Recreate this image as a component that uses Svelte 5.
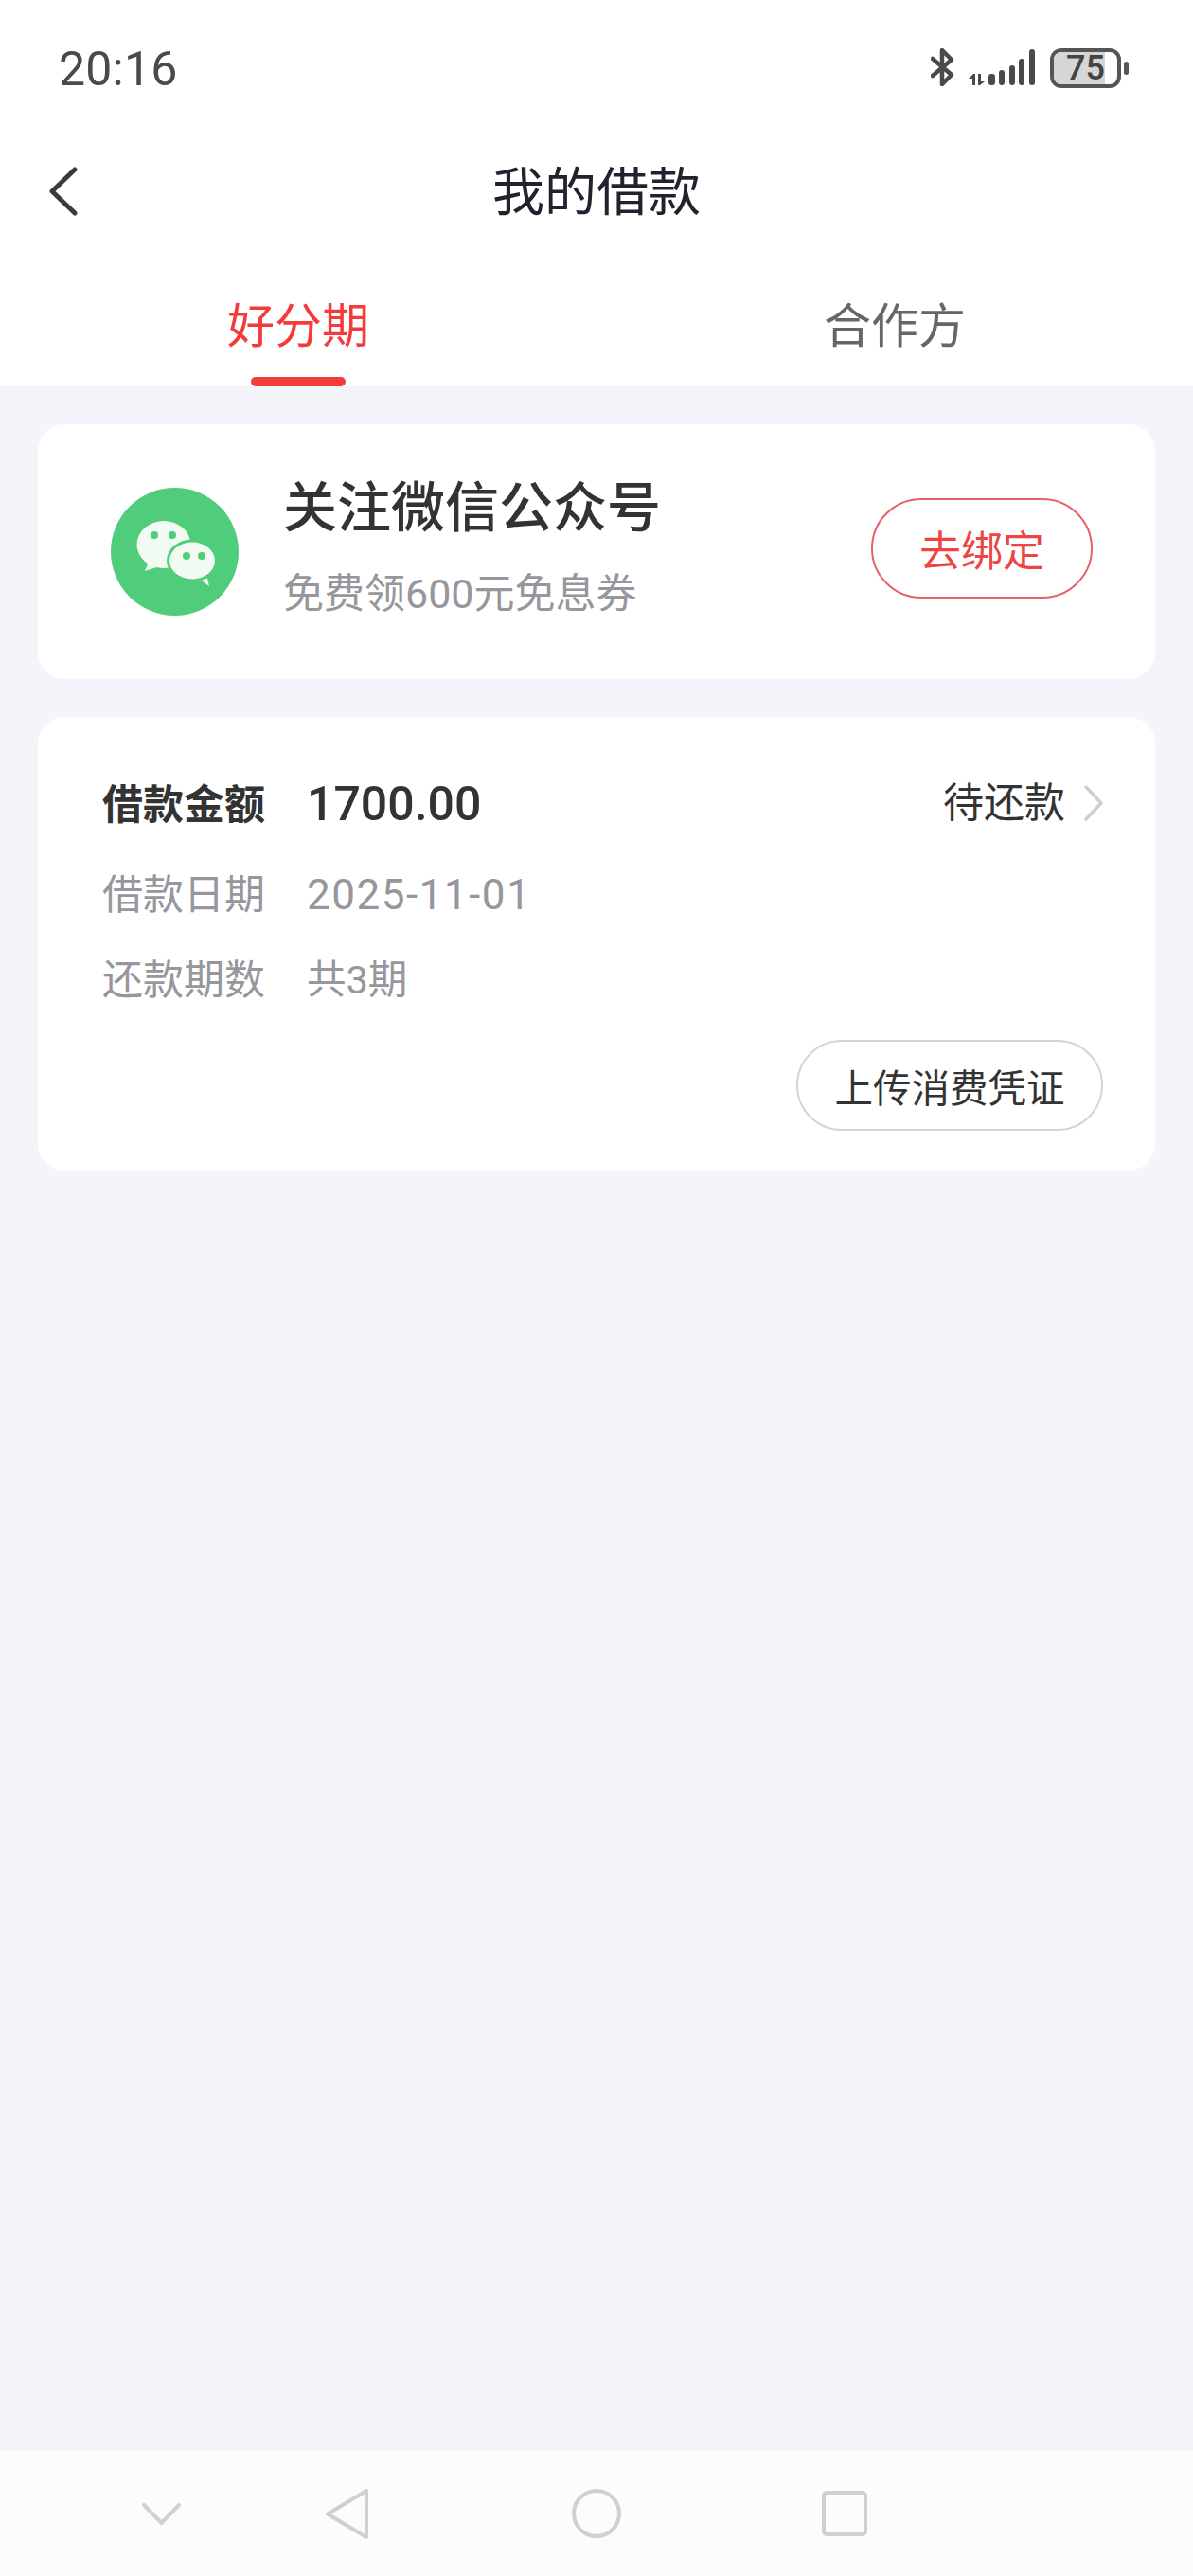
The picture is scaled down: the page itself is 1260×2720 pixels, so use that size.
<script>
	const details = [
		{ label: '借款日期', value: '2025-11-01' },
		{ label: '还款期数', value: '共3期' }
	];
</script>

<div class="page">
	<div class="status">
		<span class="time">20:16</span>
		<div class="status-icons">
			<svg class="bt" width="25" height="40" viewBox="0 0 25 40" fill="none" stroke="#4a4a4a" stroke-width="4.5" stroke-linecap="round" stroke-linejoin="round">
				<path d="M2 29 22 12 12 2V38L22 28 2 11" />
			</svg>
			<svg class="signal" width="70" height="40" viewBox="0 0 70 40" fill="#4a4a4a">
				<path d="M0 32 5 27H7V39H4V32ZM10 27H13V35H17L12 39H10Z" />
				<rect x="21" y="27" width="7" height="12" rx="3" />
				<rect x="32" y="23" width="6" height="16" rx="3" />
				<rect x="43" y="18" width="6" height="21" rx="3" />
				<rect x="53" y="11" width="6" height="28" rx="3" />
				<rect x="64" y="1" width="6" height="38" rx="3" />
			</svg>
			<div class="battery">
				<div class="battery-body">
					<div class="battery-fill"></div>
					<span class="battery-text">75</span>
				</div>
				<div class="battery-nub"></div>
			</div>
		</div>
	</div>

	<header class="header">
		<svg class="back" width="30" height="52" viewBox="0 0 30 52" fill="none" stroke="#3a3a40" stroke-width="5" stroke-linecap="round" stroke-linejoin="round">
			<path d="M27 3 3 26 27 49" />
		</svg>
		<h1>我的借款</h1>
	</header>

	<nav class="tabs">
		<div class="tab active">
			<span>好分期</span>
			<i></i>
		</div>
		<div class="tab">
			<span>合作方</span>
			<i></i>
		</div>
	</nav>

	<main class="main">
		<section class="card follow">
			<svg class="wechat" width="135" height="135" viewBox="0 0 135 135">
				<circle cx="67.5" cy="67.5" r="67.5" fill="#4fcd7b" />
				<path d="M36 88 41 76 52 83Z" fill="#f2fbf2" />
				<ellipse cx="56" cy="60" rx="28.5" ry="25" fill="#f2fbf2" />
				<path d="M104 104 93 96 101 92Z" fill="#f2fbf2" />
				<ellipse cx="86" cy="77" rx="27" ry="22.5" fill="#4fcd7b" />
				<ellipse cx="86" cy="77" rx="24" ry="19.5" fill="#f2fbf2" />
				<circle cx="46" cy="50" r="4" fill="#4fcd7b" />
				<circle cx="65" cy="50" r="4" fill="#4fcd7b" />
				<circle cx="80" cy="72" r="4" fill="#4fcd7b" />
				<circle cx="96" cy="72" r="4" fill="#4fcd7b" />
			</svg>
			<div class="follow-text">
				<div class="follow-title">关注微信公众号</div>
				<div class="follow-sub">免费领600元免息券</div>
			</div>
			<button class="bind">去绑定</button>
		</section>

		<section class="card loan">
			<div class="loan-top">
				<span class="label strong">借款金额</span>
				<span class="amount">1700.00</span>
				<span class="state">待还款</span>
				<svg class="more" width="22" height="38" viewBox="0 0 22 38" fill="none" stroke="#cfcfcf" stroke-width="3.5" stroke-linecap="round" stroke-linejoin="round">
					<path d="M3 2 19 19 3 36" />
				</svg>
			</div>
			{#each details as row}
				<div class="loan-row">
					<span class="label">{row.label}</span>
					<span class="value">{row.value}</span>
				</div>
			{/each}
			<div class="loan-actions">
				<button class="upload">上传消费凭证</button>
			</div>
		</section>
	</main>

	<footer class="navbar">
		<svg width="41" height="23" viewBox="0 0 41 23" fill="none" stroke="#d0d0d0" stroke-width="4" stroke-linecap="round" stroke-linejoin="round">
			<path d="M2 2 20.5 21 39 2" />
		</svg>
		<svg width="45" height="53" viewBox="0 0 45 53" fill="none" stroke="#d0d0d0" stroke-width="4" stroke-linejoin="round">
			<path d="M43 2V51L2 26.5Z" />
		</svg>
		<svg width="52" height="52" viewBox="0 0 52 52" fill="none" stroke="#d0d0d0" stroke-width="4">
			<circle cx="26" cy="26" r="24" />
		</svg>
		<svg width="48" height="48" viewBox="0 0 48 48" fill="none" stroke="#d0d0d0" stroke-width="4">
			<rect x="2" y="2" width="44" height="44" rx="3" />
		</svg>
	</footer>
</div>

<style>
	:global(body) {
		margin: 0;
		background: #f4f5fa;
	}

	.page {
		width: 1260px;
		height: 2720px;
		display: flex;
		flex-direction: column;
		font-family: 'Roboto', 'Noto Sans CJK SC', sans-serif;
		background: #f4f5fa;
	}

	.status {
		height: 144px;
		box-sizing: border-box;
		padding: 51px 68px 0 62px;
		display: flex;
		justify-content: space-between;
		align-items: flex-start;
		background: #fff;
	}

	.time {
		font-size: 50px;
		line-height: 44px;
		color: #4a4a4a;
		letter-spacing: 0.2px;
	}

	.status-icons {
		display: flex;
		align-items: flex-start;
	}

	.signal {
		margin-left: 15px;
	}

	.battery {
		margin-left: 16px;
		display: flex;
		align-items: center;
		gap: 3px;
		height: 42px;
	}

	.battery-body {
		position: relative;
		width: 75px;
		height: 42px;
		box-sizing: border-box;
		border: 4px solid #555;
		border-radius: 12px;
		overflow: hidden;
		display: flex;
		align-items: center;
		justify-content: center;
	}

	.battery-fill {
		position: absolute;
		left: 0;
		top: 0;
		bottom: 0;
		width: 54px;
		background: #d6d6d6;
	}

	.battery-text {
		position: relative;
		font-size: 36px;
		font-weight: 500;
		line-height: 34px;
		color: #444;
	}

	.battery-nub {
		width: 5px;
		height: 14px;
		border-radius: 3px;
		background: #555;
	}

	.header {
		position: relative;
		height: 116px;
		display: flex;
		align-items: center;
		justify-content: center;
		background: #fff;
	}

	.back {
		position: absolute;
		left: 52px;
		top: 32px;
	}

	h1 {
		margin: 2px 0 0;
		font-size: 55px;
		font-weight: 400;
		line-height: 64px;
		color: #22222e;
	}

	.tabs {
		height: 148px;
		display: flex;
		background: #fff;
	}

	.tab {
		flex: 1;
		display: flex;
		flex-direction: column;
		align-items: center;
		justify-content: flex-end;
		font-size: 50px;
		color: #666;
	}

	.tab span {
		line-height: 60px;
		margin-bottom: 23px;
	}

	.tab i {
		display: block;
		width: 100px;
		height: 10px;
		border-radius: 5px;
	}

	.tab.active {
		color: #f53a3a;
	}

	.tab.active i {
		background: #f53a3a;
	}

	.main {
		flex: 1;
		padding: 40px 40px 0;
		display: flex;
		flex-direction: column;
		gap: 40px;
	}

	.card {
		background: #fff;
		border-radius: 28px;
	}

	.follow {
		height: 269px;
		box-sizing: border-box;
		padding: 0 66px 0 77px;
		display: flex;
		align-items: center;
	}

	.wechat {
		flex: none;
	}

	.follow-text {
		margin-left: 47px;
		margin-bottom: 9px;
	}

	.follow-title {
		font-size: 57px;
		font-weight: 500;
		line-height: 66px;
		color: #333;
	}

	.follow-sub {
		margin-top: 32px;
		font-size: 43px;
		line-height: 50px;
		color: #96969c;
	}

	.bind {
		margin-left: auto;
		margin-bottom: 8px;
		width: 234px;
		height: 106px;
		padding: 0;
		border: 2px solid #e8606a;
		border-radius: 53px;
		background: #fff;
		font: inherit;
		font-size: 44px;
		color: #ee4444;
	}

	.loan {
		height: 479px;
		box-sizing: border-box;
		padding: 64px 54px 0 68px;
		display: flex;
		flex-direction: column;
	}

	.loan-top {
		display: flex;
		align-items: center;
		height: 58px;
	}

	.label {
		width: 216px;
		flex: none;
		font-size: 43px;
		line-height: 54px;
		color: #96969c;
	}

	.label.strong {
		font-weight: 700;
		color: #333;
	}

	.amount {
		font-size: 50px;
		font-weight: 500;
		color: #333;
		margin-bottom: 2px;
	}

	.state {
		margin-left: auto;
		margin-bottom: 12px;
		font-size: 43px;
		color: #333;
	}

	.more {
		margin-left: 19px;
		margin-bottom: 4px;
	}

	.loan-row {
		display: flex;
		align-items: center;
		height: 54px;
		margin-top: 36px;
	}

	.loan-top + .loan-row {
		margin-top: 39px;
	}

	.value {
		font-size: 44px;
		line-height: 54px;
		color: #96969c;
		letter-spacing: 1.5px;
	}

	.loan-row + .loan-row .value {
		font-size: 41.5px;
		letter-spacing: 0;
	}

	.loan-actions {
		margin-top: 36px;
		display: flex;
		justify-content: flex-end;
	}

	.upload {
		width: 324px;
		height: 96px;
		margin-right: 1px;
		padding: 0;
		border: 2px solid #d4d4d4;
		border-radius: 48px;
		background: #fff;
		font: inherit;
		font-size: 40.5px;
		color: #333;
	}

	.navbar {
		height: 132px;
		background: #fcfcfc;
		display: grid;
		grid-template-columns: 150px 41px 153px 45px 215px 52px 212px 48px;
		grid-template-areas: '. a . b . c . d';
		align-items: center;
	}

	.navbar svg:nth-child(1) {
		grid-area: a;
	}

	.navbar svg:nth-child(2) {
		grid-area: b;
	}

	.navbar svg:nth-child(3) {
		grid-area: c;
	}

	.navbar svg:nth-child(4) {
		grid-area: d;
	}
</style>
